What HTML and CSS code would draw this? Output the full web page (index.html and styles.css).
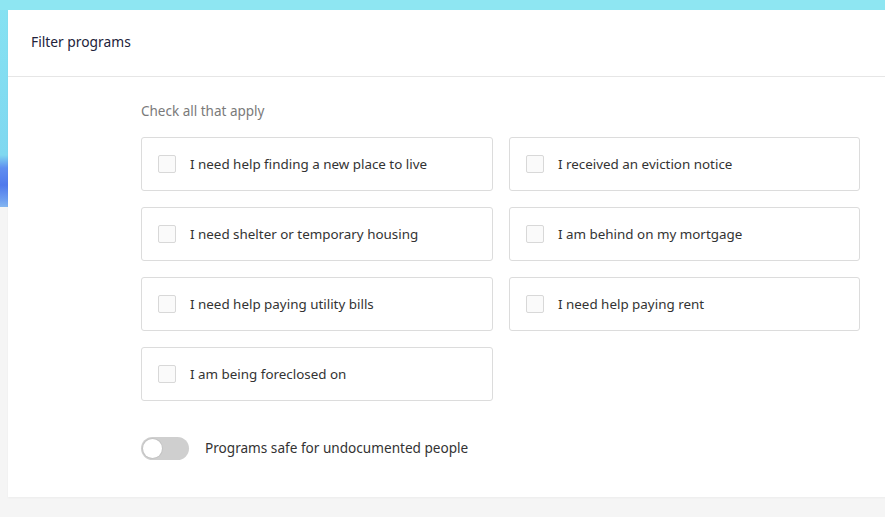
FILE: index.html
```html
<!DOCTYPE html>
<html lang="en">
<head>
<meta charset="utf-8">
<title>Filter programs</title>
<link rel="stylesheet" href="styles.css">
</head>
<body>
<div class="backdrop">
  <div class="card">
    <div class="card-header">Filter programs</div>
    <div class="card-body">
      <div class="hint">Check all that apply</div>
      <div class="options">
        <label class="option"><span class="box"></span><span>I need help finding a new place to live</span></label>
        <label class="option"><span class="box"></span><span>I received an eviction notice</span></label>
        <label class="option"><span class="box"></span><span>I need shelter or temporary housing</span></label>
        <label class="option"><span class="box"></span><span>I am behind on my mortgage</span></label>
        <label class="option"><span class="box"></span><span>I need help paying utility bills</span></label>
        <label class="option"><span class="box"></span><span>I need help paying rent</span></label>
        <label class="option"><span class="box"></span><span>I am being foreclosed on</span></label>
      </div>
      <div class="toggle-row">
        <span class="toggle"><span class="knob"></span></span>
        <span class="toggle-label">Programs safe for undocumented people</span>
      </div>
    </div>
  </div>
</div>
</body>
</html>
```
FILE: styles.css
```css
* { box-sizing: border-box; }
html, body { margin: 0; padding: 0; }
body {
  width: 885px;
  height: 517px;
  overflow: hidden;
  background: #f5f5f5;
  font-family: "Noto Sans", "Open Sans", sans-serif;
  color: #333;
}
.backdrop {
  position: relative;
  padding: 10px 0 0 8px;
  background:
    linear-gradient(to bottom, #8ee6f2 0, #8ee6f2 10px, transparent 10px),
    linear-gradient(to bottom, #86e2f2 0, #7fd8f0 155px, #5f8ef0 168px, #4f79ec 185px, #6f9ff0 200px, #84b6f0 207px, transparent 207px) left top / 8px 100% no-repeat;
}
.card {
  width: 900px;
  background: #fff;
  box-shadow: 0 1px 2px rgba(0,0,0,0.04);
}
.card-header {
  height: 67px;
  padding: 22px 0 0 23px;
  font-size: 13.8px;
  color: #22223a;
  border-bottom: 1px solid #e6e6e6;
}
.card-body {
  padding: 24px 0 37px 133px;
}
.hint {
  font-size: 13.5px;
  color: #7a7a7a;
  line-height: 20px;
  height: 20px;
  margin-bottom: 16px;
}
.options {
  display: grid;
  grid-template-columns: 352px 351px;
  column-gap: 16px;
  row-gap: 16px;
}
.option {
  display: flex;
  align-items: center;
  height: 54px;
  border: 1px solid #dcdcdc;
  border-radius: 3px;
  padding-left: 16px;
  font-size: 13.4px;
  color: #333;
}
.box {
  width: 18px;
  height: 18px;
  border: 1px solid #d8d8d8;
  border-radius: 2px;
  background: #fafafa;
  margin-right: 14px;
  flex: none;
}
.toggle-row {
  display: flex;
  align-items: center;
  margin-top: 36px;
  height: 23px;
}
.toggle {
  position: relative;
  width: 48px;
  height: 23px;
  border-radius: 12px;
  background: #cfcfcf;
  margin-right: 16px;
}
.knob {
  position: absolute;
  left: 2px;
  top: 2px;
  width: 19px;
  height: 19px;
  border-radius: 50%;
  background: #fff;
  box-shadow: 0 0 0 1px #c4c4c4;
}
.toggle-label {
  font-size: 13.6px;
  color: #333;
  margin-top: -2px;
}
```
